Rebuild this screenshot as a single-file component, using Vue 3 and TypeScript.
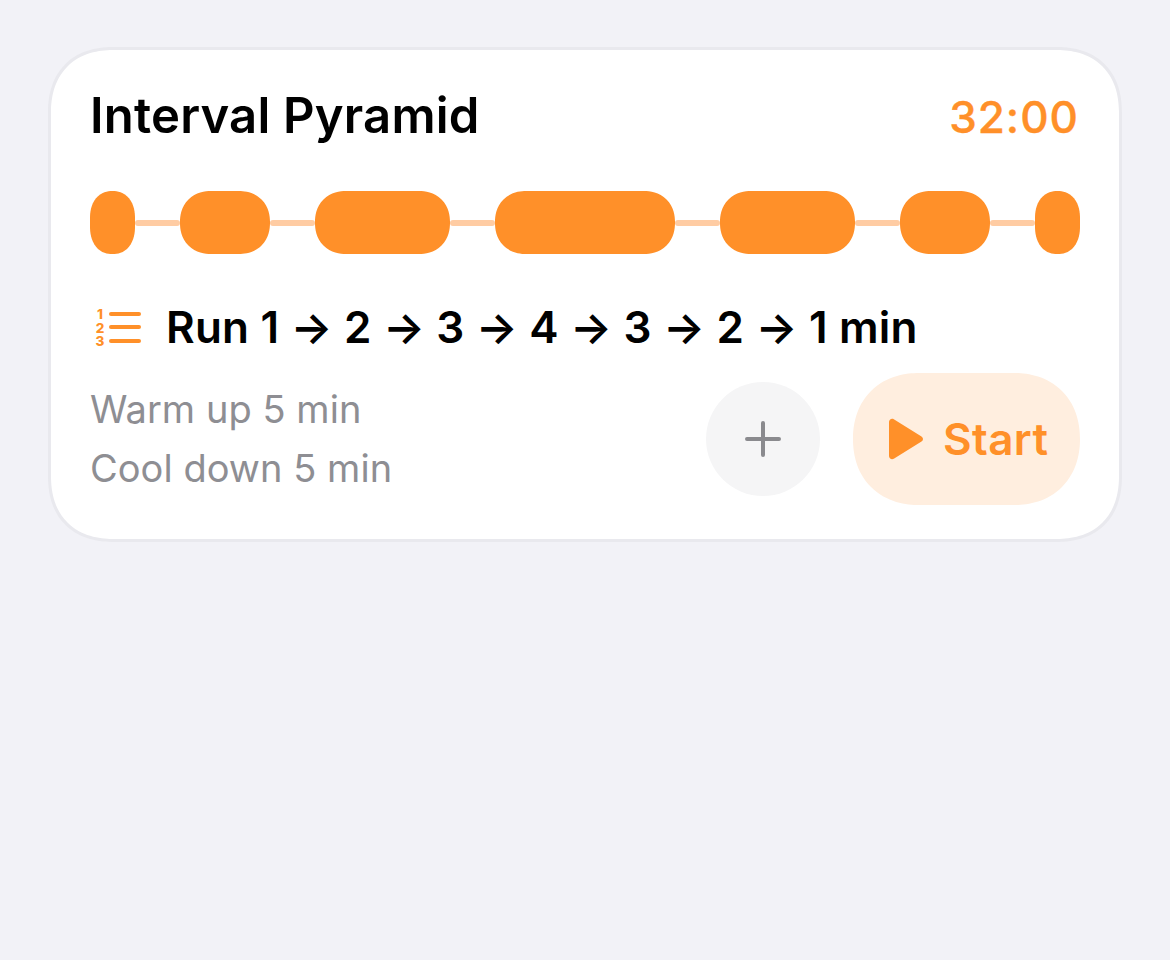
<script setup lang="ts">
const segments = [1, 2, 3, 4, 3, 2, 1];
</script>

<template>
  <div class="page">
    <section class="card">
      <header class="head">
        <h2 class="title">Interval Pyramid</h2>
        <span class="total">32:00</span>
      </header>

      <div class="track">
        <template v-for="(s, i) in segments" :key="i">
          <span v-if="i > 0" class="link"></span>
          <span class="seg" :class="{ end: s === 1 }" :style="{ flexGrow: s }"></span>
        </template>
      </div>

      <div class="plan">
        <svg class="list-icon" width="52" height="44" viewBox="0 0 52 44">
          <g fill="#ff9029" font-family="Inter, sans-serif" font-weight="800" font-size="13.500" text-anchor="middle">
            <text x="10" y="14">1</text>
            <text x="10" y="27.500">2</text>
            <text x="10" y="41">3</text>
          </g>
          <g stroke="#ff9029" stroke-width="4" stroke-linecap="round">
            <line x1="21" y1="9" x2="49" y2="9" />
            <line x1="21" y1="22" x2="49" y2="22" />
            <line x1="21" y1="36" x2="49" y2="36" />
          </g>
        </svg>
        <span class="plan-text">Run 1 → 2 → 3 → 4 → 3 → 2 → 1 min</span>
      </div>

      <div class="foot">
        <div class="notes">
          <div>Warm up 5 min</div>
          <div>Cool down 5 min</div>
        </div>
        <div class="actions">
          <button class="add" type="button" aria-label="Add">
            <svg width="38" height="38" viewBox="0 0 38 38">
              <path d="M19 3V35M3 19H35" stroke="#8a8a8e" stroke-width="4" stroke-linecap="round" fill="none" />
            </svg>
          </button>
          <button class="start" type="button">
            <svg width="36" height="42" viewBox="0 0 36 42">
              <path d="M1 4C1 1.500 3.600 0 5.800 1.200L33.500 18.400C35.500 19.600 35.500 22.400 33.500 23.600L5.800 40.800C3.600 42 1 40.500 1 38Z" fill="#ff9029" />
            </svg>
            <span>Start</span>
          </button>
        </div>
      </div>
    </section>
  </div>
</template>

<style scoped>
.page {
  padding: 47px 48px;
  font-family: Inter, "Liberation Sans", sans-serif;
}
.card {
  box-sizing: border-box;
  height: 495px;
  padding: 36px 39px 0;
  background: #fff;
  border: 3px solid #e9e9ee;
  border-radius: 66px;
  corner-shape: superellipse(1.2);
}
.head {
  display: flex;
  justify-content: space-between;
  align-items: baseline;
  height: 58px;
}
.title {
  margin: 0;
  font-size: 49px;
  font-weight: 600;
  letter-spacing: 0.2px;
  color: #000;
}
.total {
  margin-right: 1px;
  font-size: 44px;
  font-weight: 500;
  letter-spacing: 1px;
  -webkit-text-stroke: 0.4px #ff9029;
  color: #ff9029;
}
.track {
  display: flex;
  align-items: center;
  margin-top: 47px;
  height: 63px;
}
.seg {
  flex: 1 1 0;
  height: 63px;
  border-radius: 31px;
  corner-shape: superellipse(1.12);
  background: #ff9029;
}
.seg.end {
  border-radius: 22px / 27px;
}
.link {
  flex: 0 0 45px;
  height: 6px;
  border-radius: 3px;
  background: #ffcca3;
}
.plan {
  display: flex;
  align-items: center;
  gap: 24px;
  margin-top: 45px;
  height: 56px;
}
.plan-text {
  font-size: 44px;
  font-weight: 600;
  letter-spacing: 0.2px;
  color: #000;
}
.foot {
  display: flex;
  justify-content: space-between;
  align-items: center;
  margin-top: 18px;
}
.notes {
  font-size: 38px;
  line-height: 59px;
  letter-spacing: 0.04px;
  color: #8e8e93;
}
.actions {
  display: flex;
  align-items: center;
  gap: 33px;
}
.add {
  display: flex;
  align-items: center;
  justify-content: center;
  width: 114px;
  height: 114px;
  padding: 0;
  border: 0;
  border-radius: 50%;
  background: #f5f5f6;
}
.start {
  display: flex;
  align-items: center;
  gap: 19px;
  box-sizing: border-box;
  width: 227px;
  height: 132px;
  padding: 0 0 0 35px;
  border: 0;
  border-radius: 66px;
  corner-shape: superellipse(1.12);
  background: #ffeedf;
  font-family: inherit;
  font-size: 44px;
  font-weight: 600;
  letter-spacing: 0.4px;
  color: #ff9029;
}
</style>

<style>
body {
  background: #f2f2f7;
}
</style>
